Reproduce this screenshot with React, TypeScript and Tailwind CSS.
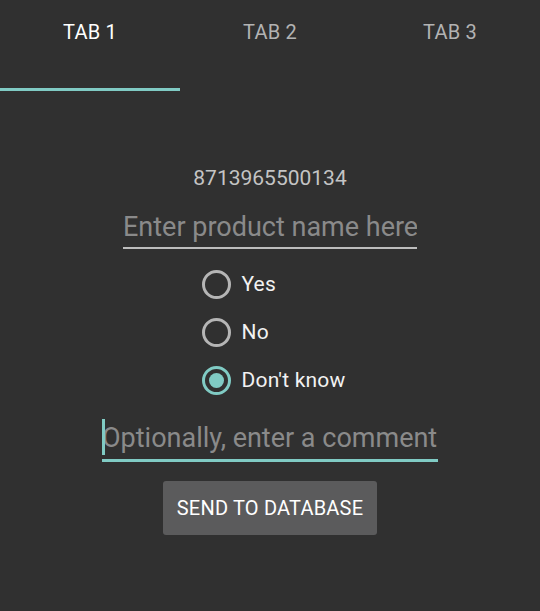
import React from "react";

const options = [
  { label: "Yes", checked: false },
  { label: "No", checked: false },
  { label: "Don't know", checked: true },
];

export default function App() {
  return (
    <div
      className="w-[540px] min-h-[611px] bg-[#303030]"
      style={{ fontFamily: "Roboto, 'Noto Sans', sans-serif" }}
    >
      <div className="flex h-[91px]">
        {["TAB 1", "TAB 2", "TAB 3"].map((t, i) => (
          <div key={t} className="flex-1 flex flex-col items-center">
            <span
              className={
                "pt-[20px] text-[20px] leading-[24px] tracking-[0.2px] " +
                (i === 0 ? "text-white" : "text-[#b3b3b3]")
              }
            >
              {t}
            </span>
            <div
              className={
                "mt-auto w-full h-[3px] " + (i === 0 ? "bg-[#80cbc4]" : "")
              }
            />
          </div>
        ))}
      </div>

      <div className="flex flex-col items-center">
        <div className="mt-[75px] text-[21px] leading-[24px] text-[#c4c4c4]">
          8713965500134
        </div>

        <div className="mt-[21px] w-[294px] border-b-2 border-[#bdbdbd] pb-[4px]">
          <input
            className="w-full bg-transparent outline-none text-[27px] leading-[32px] h-[32px] text-white placeholder:text-[#8a8a8a]"
            placeholder="Enter product name here"
          />
        </div>

        <div className="mt-[11px] ml-[8px] flex flex-col">
          {options.map((o) => (
            <div key={o.label} className="h-[48px] flex items-center gap-[10px]">
              <div
                className={
                  "w-[29px] h-[29px] rounded-full border-[3px] flex items-center justify-center " +
                  (o.checked ? "border-[#80cbc4]" : "border-[#b5b5b5]")
                }
              >
                {o.checked && (
                  <div className="w-[15px] h-[15px] rounded-full bg-[#80cbc4]" />
                )}
              </div>
              <span className="text-[21px] leading-[24px] tracking-[0.2px] text-[#f2f2f2]">
                {o.label}
              </span>
            </div>
          ))}
        </div>

        <div className="mt-[18px] relative w-[336px] border-b-[3px] border-[#80cbc4] pb-[5px]">
          <div className="absolute left-0 top-[-3px] w-[3px] h-[36px] bg-[#80cbc4]" />
          <input
            className="w-full bg-transparent outline-none text-[27px] leading-[32px] h-[32px] text-white placeholder:text-[#8a8a8a]"
            placeholder="Optionally, enter a comment"
          />
        </div>

        <button className="mt-[19px] w-[214px] h-[54px] rounded-[3px] bg-[#5b5b5c] text-white text-[20px] leading-[24px] tracking-[0.2px]">
          SEND TO DATABASE
        </button>
      </div>
    </div>
  );
}
